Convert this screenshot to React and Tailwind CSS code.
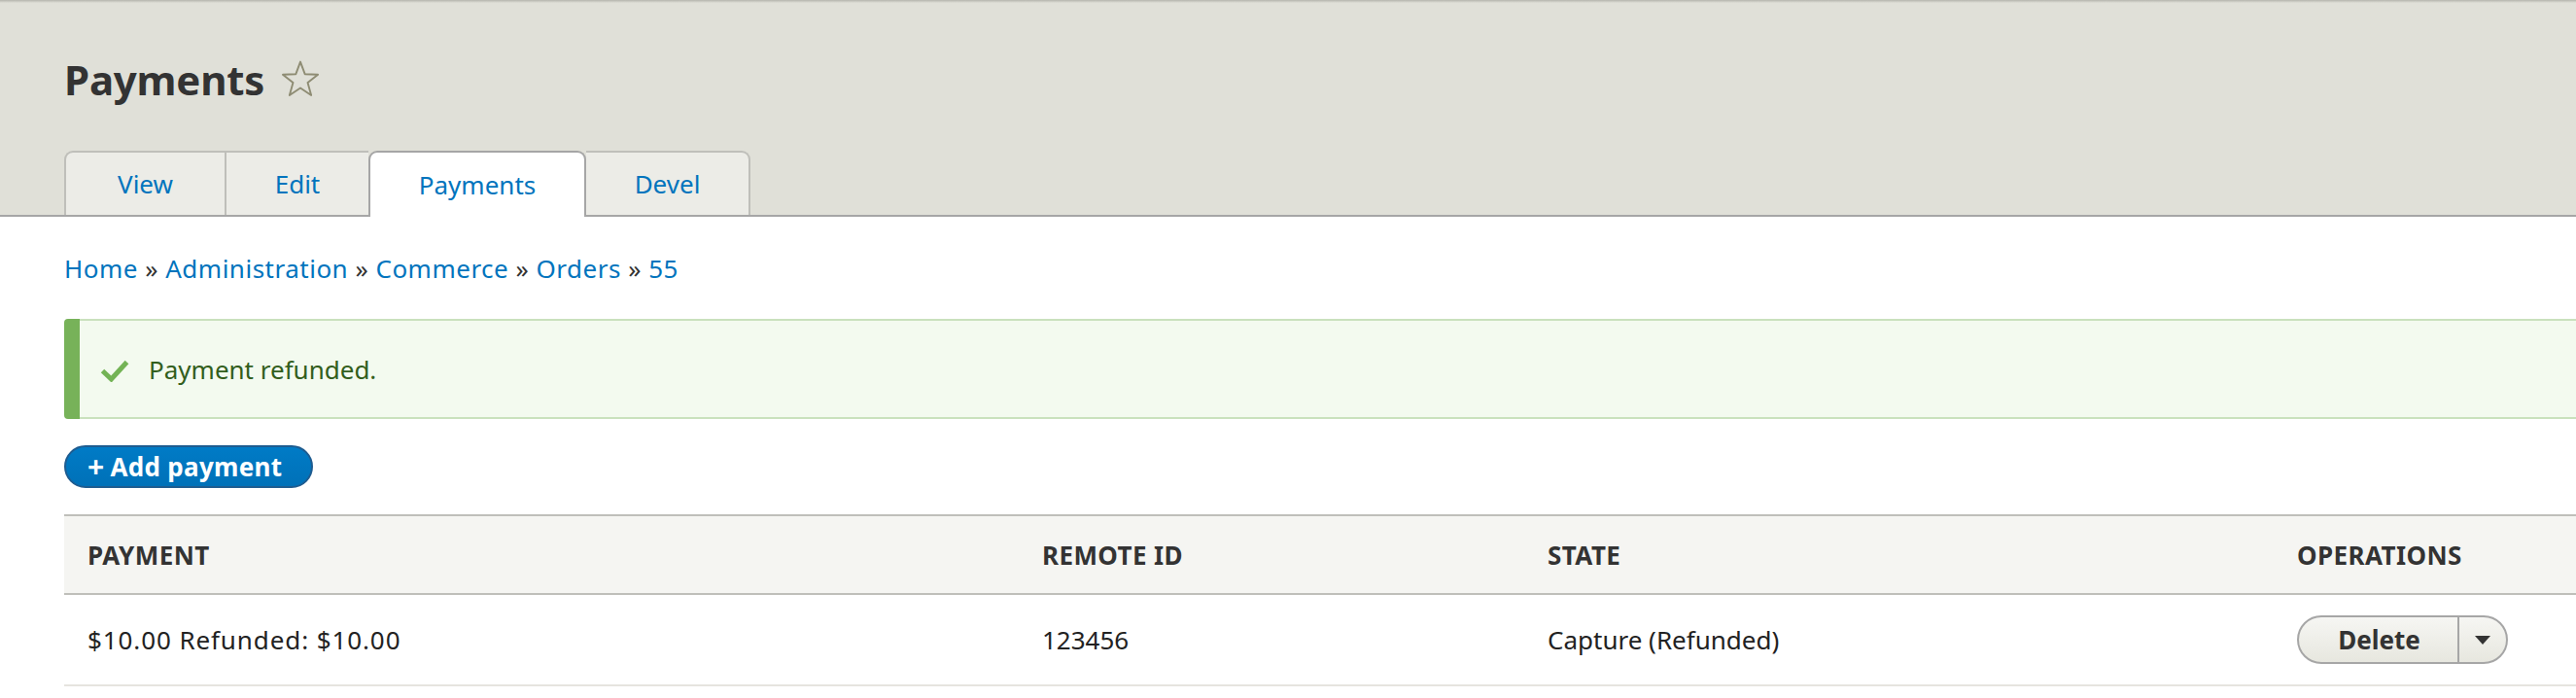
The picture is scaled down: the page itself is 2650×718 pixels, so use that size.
export default function App() {
  return (
    <div className="w-[2650px] h-[718px] overflow-hidden bg-white font-['Noto_Sans',sans-serif] text-[#333]">
      <header className="bg-[#e0e0d8] border-b-2 border-[#a6a6a6] h-[223px]">
        <div className="h-[3px] bg-gradient-to-b from-[#b5b5ad] to-[#e0e0d8]" />
        <div className="pl-[66px] pt-[54px]">
          <div className="flex items-center h-[50px]">
            <h1 className="text-[42px] leading-[50px] font-bold text-[#333] tracking-[-0.2px]">Payments</h1>
            <svg className="ml-[18px] mt-[-2px]" width="38" height="38" viewBox="0 0 36 36">
              <polygon
                points="18,1.5 22.41,13.43 35.12,13.94 25.13,21.82 28.58,34.06 18,27 7.42,34.06 10.87,21.82 0.88,13.94 13.59,13.43"
                fill="none"
                stroke="#8e8c73"
                strokeWidth="1.8"
                strokeLinejoin="round"
              />
            </svg>
          </div>
          <nav className="flex items-start mt-[48px] h-[66px]">
            <a className="w-[165px] h-[66px] flex items-center justify-center border-l-2 border-t-2 border-[#bfbfba] bg-[#ecece7] rounded-tl-[9px] text-[26px] leading-[40px] text-[#0074bd]">View</a>
            <a className="w-[148px] h-[66px] flex items-center justify-center border-l-2 border-t-2 border-[#bfbfba] bg-[#ecece7] text-[26px] leading-[40px] text-[#0074bd]">Edit</a>
            <a className="relative z-10 w-[224px] h-[68px] flex items-center justify-center border-2 border-b-0 border-[#a6a6a6] bg-white rounded-t-[9px] text-[26px] leading-[40px] text-[#0074bd]">Payments</a>
            <a className="w-[169px] h-[66px] flex items-center justify-center border-r-2 border-t-2 border-[#bfbfba] bg-[#ecece7] rounded-tr-[9px] text-[26px] leading-[40px] text-[#0074bd]">Devel</a>
          </nav>
        </div>
      </header>

      <main className="pl-[66px]">
        <div className="mt-[33px] h-[40px] text-[26px] leading-[40px] tracking-[0.5px] text-[#333]">
          <a className="text-[#0074bd]">Home</a> » <a className="text-[#0074bd]">Administration</a> »{" "}
          <a className="text-[#0074bd]">Commerce</a> » <a className="text-[#0074bd]">Orders</a> »{" "}
          <a className="text-[#0074bd]">55</a>
        </div>

        <div className="mt-[32px] flex h-[103px] rounded-l-[4px] overflow-hidden">
          <div className="w-[16px] bg-[#77b259]" />
          <div className="flex-1 flex items-center border-y-2 border-[#c9e1bd] bg-[#f3faef] pl-[21px]">
            <svg width="30" height="24" viewBox="0 0 30 24" className="mt-[2px]">
              <path d="M2.5 12.5 L11.5 21 L27.5 3.5" fill="none" stroke="#73b355" strokeWidth="5" />
            </svg>
            <span className="ml-[20px] text-[26px] leading-[40px] text-[#325e1c]">Payment refunded.</span>
          </div>
        </div>

        <div className="mt-[27px]">
          <a className="inline-flex items-center w-[256px] h-[44px] rounded-full border-2 border-[#1e5c90] bg-gradient-to-b from-[#007bc6] to-[#0071b8] pl-[22px] text-[26px] leading-[40px] font-bold tracking-[0.3px] text-white">
            <span className="text-[30px] mr-[6px]">+</span>Add payment
          </a>
        </div>

        <div className="mt-[27px]">
          <div className="grid grid-cols-[982px_520px_771px_1fr] h-[83px] border-y-2 border-[#bfbfba] bg-[#f5f5f2] items-center text-[26px] leading-[40px] font-bold uppercase tracking-[0.4px] text-[#333]">
            <div className="px-[24px]">Payment</div>
            <div className="px-[24px]">Remote ID</div>
            <div className="px-[24px]">State</div>
            <div className="px-[24px]">Operations</div>
          </div>
          <div className="grid grid-cols-[982px_520px_771px_1fr] h-[94px] border-b-2 border-[#e6e4df] items-center text-[26px] leading-[40px] text-[#222]">
            <div className="px-[24px] tracking-[0.9px]">$10.00 Refunded: $10.00</div>
            <div className="px-[24px]">123456</div>
            <div className="px-[24px]">Capture (Refunded)</div>
            <div className="px-[24px]">
              <div className="flex w-[217px] h-[50px] rounded-full border-2 border-[#a6a6a6] bg-gradient-to-b from-[#f6f6f3] to-[#e7e7df] overflow-hidden">
                <div className="w-[163px] flex items-center justify-center font-bold text-[#333] pl-[2px]">Delete</div>
                <div className="flex-1 flex items-center justify-center border-l-2 border-[#a6a6a6]">
                  <svg width="16" height="9" viewBox="0 0 16 9">
                    <polygon points="0,0 16,0 8,9" fill="#333" />
                  </svg>
                </div>
              </div>
            </div>
          </div>
        </div>
      </main>
    </div>
  );
}
